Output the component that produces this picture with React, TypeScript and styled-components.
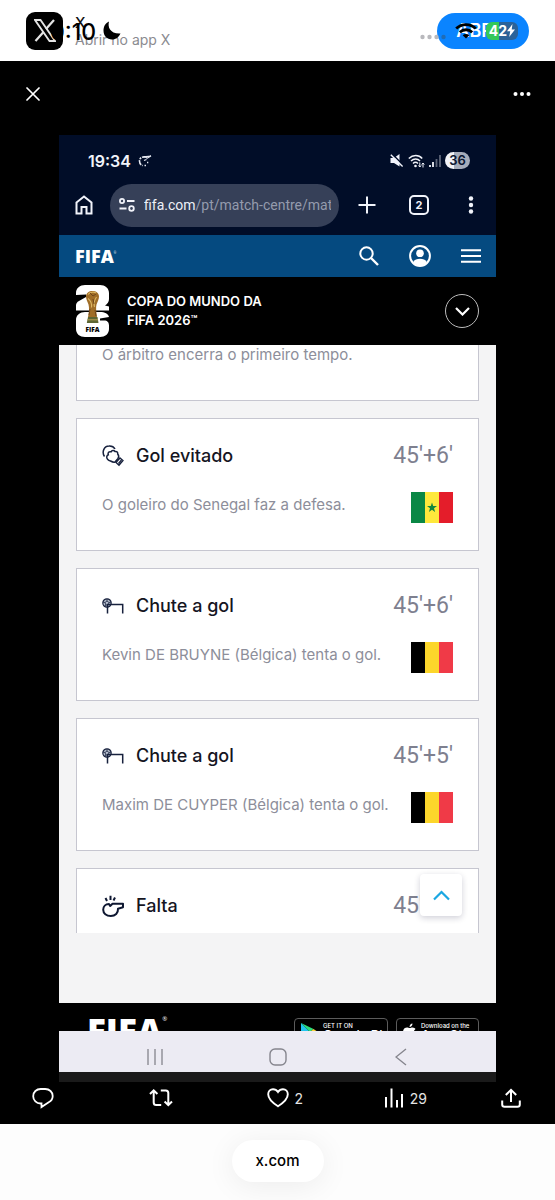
import React from "react";
import styled, { createGlobalStyle } from "styled-components";

const GlobalStyle = createGlobalStyle`
  *, *::before, *::after { box-sizing: border-box; }
  body {
    margin: 0;
    background: #fdfdfd;
    font-family: Inter, "Liberation Sans", sans-serif;
    color: #15151f;
  }
  button { border: 0; padding: 0; margin: 0; background: none; color: inherit; font: inherit; }
  a { color: inherit; text-decoration: none; }
  h2, h3, p, ul { margin: 0; padding: 0; }
  svg { display: block; flex: none; }
`;

/* ---------- App banner ---------- */

const Banner = styled.header`
  position: relative;
  display: flex;
  align-items: center;
  height: 61px;
  padding: 0 26px;
  background: #fff;
`;

const AppIcon = styled.span`
  display: grid;
  place-items: center;
  width: 37px;
  height: 38px;
  border-radius: 9px;
  background: #000;
`;

const BannerText = styled.div`
  display: flex;
  flex-direction: column;
  flex: 1;
  margin-left: 12px;
  font-size: 14px;
  line-height: 17px;
  color: #8b8b90;
`;

const BannerTitle = styled.strong`
  font-size: 15px;
  font-weight: 500;
  color: #111;
`;

const OpenButton = styled.button`
  width: 92px;
  height: 36px;
  border-radius: 18px;
  background: #0a84ff;
  color: #fff;
  font-size: 18px;
  font-weight: 600;
`;

const SystemStatus = styled.div`
  position: absolute;
  inset: 0 37px 0 50px;
  display: flex;
  align-items: center;
  justify-content: space-between;
  pointer-events: none;
`;

const StatusGroup = styled.div<{ $gap: number }>`
  display: flex;
  align-items: center;
  gap: ${(p) => p.$gap}px;
`;

const SystemTime = styled.time`
  font-size: 23px;
  line-height: 28px;
  padding-top: 2px;
  font-weight: 500;
  color: #000;
`;

const Carrier = styled.span`
  padding-top: 12px;
`;

const Battery = styled.span`
  display: flex;
  align-items: center;
  justify-content: center;
  width: 32px;
  height: 18px;
  border-radius: 6px;
  background: linear-gradient(90deg, #34c759 42%, #2a6299 42%);
  color: #fff;
  font-size: 14px;
  line-height: 18px;
  font-weight: 700;
`;

/* ---------- Media viewer ---------- */

const Viewer = styled.main`
  background: #000;
  color: #fff;
`;

const ViewerTop = styled.div`
  display: flex;
  justify-content: space-between;
  height: 74px;
  padding: 21px 21px 0;
`;

const IconButton = styled.button`
  display: grid;
  place-items: center;
  width: 24px;
  height: 24px;
`;

const Shot = styled.article`
  margin: 0 59px;
  overflow: hidden;
`;

const BrowserChrome = styled.div`
  background: #010d28;
  color: #f1f3fa;
`;

const PhoneStatus = styled.div`
  display: flex;
  align-items: center;
  justify-content: space-between;
  height: 48px;
  padding: 3px 26px 0 29px;
`;

const PhoneTime = styled.time`
  font-size: 16px;
  font-weight: 600;
`;

const PhoneBattery = styled.span`
  width: 25px;
  height: 17px;
  border-radius: 9px;
  background: linear-gradient(90deg, #f2f3f8 34%, #a6acba 34%);
  color: #0b1530;
  font-size: 13px;
  line-height: 17px;
  font-weight: 600;
  text-align: center;
`;

const Toolbar = styled.div`
  display: flex;
  align-items: center;
  height: 52px;
  padding: 0 13px 8px;
`;

const Address = styled.button`
  display: flex;
  align-items: center;
  flex: 1;
  min-width: 0;
  height: 43px;
  margin: 0 16px 0 14px;
  padding: 0 8px;
  gap: 8px;
  border-radius: 22px;
  background: #364058;
`;

const Url = styled.span`
  flex: 1;
  overflow: hidden;
  white-space: nowrap;
  text-align: left;
  font-family: Roboto, "Liberation Sans", sans-serif;
  font-size: 14px;
  line-height: 20px;
  color: #949bad;
`;

const Host = styled.span`
  color: #eef0f7;
`;

const ActionSet = styled.div<{ $gap: number }>`
  display: flex;
  align-items: center;
  gap: ${(p) => p.$gap}px;
`;

const SiteBar = styled.nav`
  display: flex;
  align-items: center;
  justify-content: space-between;
  height: 42px;
  padding: 0 13px 0 16px;
  background: #054a80;
`;

const Wordmark = styled.a<{ $size: number }>`
  display: flex;
  align-items: flex-start;
  font-family: "Open Sans", "Liberation Sans", sans-serif;
  font-size: ${(p) => p.$size}px;
  line-height: 1;
  font-weight: 800;
  color: #fff;
`;

const Registered = styled.sup<{ $size: number }>`
  font-size: ${(p) => p.$size}px;
  line-height: 12px;
  font-weight: 400;
  vertical-align: baseline;
`;

const EventBar = styled.div`
  display: flex;
  align-items: center;
  gap: 17px;
  height: 68px;
  padding: 0 17px;
  background: #000;
`;

const EventName = styled.h2`
  flex: 1;
  font-size: 13px;
  line-height: 19px;
  font-weight: 600;
`;

const TradeMark = styled.sup`
  font-size: 11px;
  line-height: 8px;
  vertical-align: 2px;
`;

const Expand = styled.button`
  display: grid;
  place-items: center;
  width: 34px;
  height: 34px;
  border: 1px solid #bcbcbc;
  border-radius: 50%;
`;

/* ---------- Match feed ---------- */

const Feed = styled.section`
  position: relative;
  padding: 0 17px 70px;
  background: #f4f4f5;
`;

const FeedList = styled.ul`
  display: flex;
  flex-direction: column;
  gap: 17px;
  list-style: none;
`;

const Card = styled.li<{ $cut?: "top" | "bottom" }>`
  height: ${(p) => (p.$cut === "top" ? 56 : p.$cut === "bottom" ? 65 : 133)}px;
  padding: ${(p) => (p.$cut === "top" ? 0 : 21)}px 25px 0;
  overflow: hidden;
  border: 1px solid #c6c6d0;
  border-top-width: ${(p) => (p.$cut === "top" ? 0 : 1)}px;
  border-bottom-width: ${(p) => (p.$cut === "bottom" ? 0 : 1)}px;
  background: #fff;
`;

const CardHead = styled.div`
  display: flex;
  align-items: center;
  gap: 12px;
  height: 32px;
  margin-bottom: 20px;
`;

const CardTitle = styled.h3`
  flex: 1;
  font-size: 18px;
  line-height: 24px;
  font-weight: 500;
  color: #15151f;
`;

const Minute = styled.span`
  font-family: Roboto, "Liberation Sans", sans-serif;
  font-size: 23px;
  line-height: 32px;
  color: #7e808f;
`;

const CardBody = styled.div`
  display: flex;
  justify-content: space-between;
`;

const Description = styled.p`
  font-size: 15px;
  line-height: 26px;
  white-space: nowrap;
  color: #8d8e9a;
`;

const CutDescription = styled(Description)`
  line-height: 20px;
`;

const ToTop = styled.button`
  position: absolute;
  right: 34px;
  bottom: 87px;
  display: grid;
  place-items: center;
  width: 42px;
  height: 42px;
  border-radius: 4px;
  background: #fff;
  box-shadow: 0 2px 6px rgba(20, 20, 60, 0.2);
`;

const SiteFooter = styled.footer`
  display: flex;
  align-items: flex-start;
  gap: 8px;
  height: 28px;
  padding: 15px 17px 0 28px;
  overflow: hidden;
  background: #000;
`;

const FooterBrand = styled.div`
  flex: 1;
  margin-top: -5px;
`;

const StoreBadge = styled.a<{ $width: number }>`
  display: flex;
  gap: 5px;
  width: ${(p) => p.$width}px;
  height: 28px;
  padding: 3px 6px;
  border: 1px solid #5c5c5c;
  border-radius: 4px;
`;

const StoreText = styled.span`
  display: flex;
  flex-direction: column;
  font-size: 6px;
  line-height: 7px;
  font-weight: 500;
  white-space: nowrap;
`;

const StoreName = styled.strong`
  font-size: 13px;
  line-height: 13px;
  font-weight: 500;
`;

const NavBar = styled.div`
  display: grid;
  grid-template-columns: repeat(3, 1fr);
  align-items: center;
  justify-items: center;
  height: 41px;
  padding: 11px 34px 0;
  background: #ecebf3;
  color: #85858d;
`;

const Strip = styled.div`
  height: 10px;
  background: #1a1a1a;
`;

const PostActions = styled.div`
  display: flex;
  height: 42px;
  padding: 4px 34px 0 32px;
`;

const PostAction = styled.button<{ $last?: boolean }>`
  display: flex;
  align-items: center;
  flex: ${(p) => (p.$last ? "none" : 1)};
  gap: 6px;
  height: 24px;
  font-size: 14px;
  color: #e4e4e4;
`;

const Bottom = styled.footer`
  display: flex;
  justify-content: center;
  height: 76px;
  padding-top: 16px;
  overflow: hidden;
  background: #fdfdfd;
`;

const Site = styled.a`
  width: 92px;
  height: 42px;
  border-radius: 21px;
  background: #fff;
  box-shadow: 0 4px 30px rgba(0, 0, 0, 0.07);
  font-size: 15px;
  line-height: 42px;
  font-weight: 500;
  text-align: center;
  color: #000;
`;

/* ---------- Drawings ---------- */

const line = { fill: "none", stroke: "currentColor", strokeWidth: 2 } as const;

const XLogo = () => (
  <svg width="22" height="23" viewBox="0 0 22 23" fill="none" stroke="#e4e4e4">
    <path d="M1 1h5.500l14.500 21h-5.500z" strokeWidth="1.800" />
    <path d="M20 1l-8 9M9.500 13L1.500 22" strokeWidth="2.200" />
  </svg>
);

const Moon = () => (
  <svg width="18" height="19" viewBox="0 0 18 19" fill="#000">
    <path d="M6 .5C4.500 6 7 13 17.500 12.500 15.500 17 12 18.500 9 18.500 4 18.500.5 14.800.5 9.800.5 5.500 2.500 2 6 .5z" />
  </svg>
);

const SignalDots = () => (
  <svg width="26" height="6" viewBox="0 0 26 6" fill="#b9b9bd">
    <circle cx="2.500" cy="3" r="2.200" />
    <circle cx="9.500" cy="3" r="2.200" />
    <circle cx="16.500" cy="3" r="2.200" />
    <circle cx="23.500" cy="3" r="2.200" fill="#216cb4" />
  </svg>
);

const WifiBold = () => (
  <svg width="22" height="16" viewBox="0 0 22 16" fill="none" stroke="#000" strokeWidth="2.800">
    <path d="M1.200 5.500c5.600-5.200 14-5.200 19.600 0M4.800 9.200c3.600-3.300 8.800-3.300 12.400 0" />
    <path d="M11 15.500L7.700 12.200c1.900-1.700 4.700-1.700 6.600 0z" fill="#000" stroke="none" />
  </svg>
);

const Bolt = () => (
  <svg width="8" height="13" viewBox="0 0 8 13" fill="#fff">
    <path d="M5.500 0L0 7.200h3.200L2.200 13 8 5.600H4.700z" />
  </svg>
);

const Close = () => (
  <svg width="14" height="14" viewBox="0 0 14 14" {...line} strokeLinecap="round" strokeWidth="1.700">
    <path d="M1 1l12 12M13 1L1 13" />
  </svg>
);

const Dots = ({ vertical }: { vertical?: boolean }) =>
  vertical ? (
    <svg width="6" height="18" viewBox="0 0 6 18" fill="currentColor">
      <circle cx="3" cy="2.500" r="2.200" />
      <circle cx="3" cy="9" r="2.200" />
      <circle cx="3" cy="15.500" r="2.200" />
    </svg>
  ) : (
    <svg width="18" height="6" viewBox="0 0 18 6" fill="currentColor">
      <circle cx="2.500" cy="3" r="2" />
      <circle cx="9" cy="3" r="2" />
      <circle cx="15.500" cy="3" r="2" />
    </svg>
  );

const Spinner = () => (
  <svg width="14" height="12" viewBox="0 0 14 12" fill="none" stroke="#e6e9f2" strokeWidth="1.600">
    <path d="M9 2.200C4.500 1 1.500 3 1.500 6c0 2.300 1.300 4 3.200 4.600" strokeDasharray="5 1 2 1" />
    <path d="M5.500 1.800L13 1 8.500 3.500" strokeWidth="1.200" />
    <path d="M6.500 10.500h1.500M9 7.500h1.300M6 5.500l2.500-1" strokeWidth="1.300" />
  </svg>
);

const Muted = () => (
  <svg width="14" height="13" viewBox="0 0 14 13">
    <path d="M.5 4h3.500l5.500-4v12.500L4 9H.5z" fill="currentColor" />
    <path d="M1.800 -.2l12 12" stroke="#010d28" strokeWidth="1.600" />
    <path d="M.8.8l11.800 11.700" stroke="currentColor" strokeWidth="1.400" />
  </svg>
);

const WifiThin = () => (
  <svg width="17" height="14" viewBox="0 0 17 14" fill="none" stroke="currentColor" strokeWidth="1.500">
    <path d="M.8 4.500c4-4 10-4 13.400 0M3 7c2.800-2.800 6.500-2.800 9 0M5 9.500c1.500-1.400 3.500-1.400 5 0" />
    <circle cx="7.500" cy="12" r="1.300" fill="currentColor" stroke="none" />
    <path d="M11.800 8.500v4.500M15 13.500V9M10.500 11.500l1.300 1.500 1.300-1.500M13.700 10.500L15 9l1.300 1.500" strokeWidth="1" />
  </svg>
);

const Bars = () => (
  <svg width="12" height="12" viewBox="0 0 12 12">
    <path d="M1 10v2M4 7v5" stroke="#eef0f7" strokeWidth="1.800" />
    <path d="M7.500 4v8M11 0v12" stroke="#5d6579" strokeWidth="1.800" />
  </svg>
);

const Home = () => (
  <svg width="18" height="20" viewBox="0 0 18 20" {...line}>
    <path d="M1.500 7.500L9 1.500l7.500 6V18.500h-5v-6.500h-5v6.500h-5z" />
  </svg>
);

const Tune = () => (
  <svg width="18" height="14" viewBox="0 0 18 14" {...line} strokeWidth="1.800">
    <circle cx="4" cy="3" r="2.100" />
    <circle cx="13.500" cy="10.500" r="2.300" />
    <path d="M9 3h7.500M1.500 10.500h7" />
  </svg>
);

const Plus = () => (
  <svg width="18" height="18" viewBox="0 0 18 18" {...line}>
    <path d="M9 0.500v17M.5 9h17" />
  </svg>
);

const TabFrame = styled.span`
  display: block;
  width: 20px;
  height: 20px;
  border: 2px solid currentColor;
  border-radius: 5px;
  font-size: 11px;
  line-height: 16px;
  font-weight: 700;
  text-align: center;
`;

const Search = () => (
  <svg width="20" height="20" viewBox="0 0 20 20" {...line}>
    <circle cx="7.500" cy="7.500" r="6.200" />
    <path d="M12 12l7 7" strokeWidth="2.400" />
  </svg>
);

const Account = () => (
  <svg width="22" height="22" viewBox="0 0 22 22" fill="#fff">
    <circle cx="11" cy="11" r="9.900" fill="none" stroke="#fff" strokeWidth="2" />
    <circle cx="11" cy="8.300" r="3.800" />
    <path d="M4 17.200c1.500-2.600 4-3.500 7-3.500s5.500.9 7 3.500c-1.900 2-4.200 3.300-7 3.300s-5.100-1.300-7-3.300z" />
  </svg>
);

const Menu = () => (
  <svg width="20" height="14" viewBox="0 0 20 14" {...line}>
    <path d="M0 1.200h20M0 7h20M0 12.800h20" />
  </svg>
);

const CupLogo = () => (
  <svg width="34" height="52" viewBox="0 0 34 52">
    <path d="M0 8C0 3 4 0 9 0h15c5 0 9 3 9 8v6c0 3-1.500 5-4 6.500l4 1v4H0V20.500c0-2 1-3.500 3-4.500l7-4V9.500L0 10z" fill="#fff" />
    <path d="M9 27h15c5 0 8 1.500 9 5l-9 1.500v2h4c3.500 0 5 2 5 5v3.500c0 5-4 8-9 8H9c-5 0-9-3-9-8V35c0-5 4-8 9-8z" fill="#fff" />
    <path d="M10 11.500C10 8 13 6 16.500 6s6.500 2 6.500 5.500c0 3-1.500 5-2.500 8-.8 3-.3 7 .5 12.500h-9c1.300-5.500 1.300-9 .5-12.500-1-3-2.500-5-2.500-8z" fill="#a06d27" />
    <path d="M12 9.500c2-2.500 6-3 8-1.500M12 13.500c2.500 2 4 5.500 3.500 9M20.500 12c-2 3-3 6-2 10" fill="none" stroke="#dcb765" strokeWidth="1.100" />
    <path d="M14 8l3 3 3-2M17 14l1 5M14 24l-1 6M19 25l1 6" fill="none" stroke="#6e461b" strokeWidth="1" />
    <path d="M12 32h9.500l1 6H10.800z" fill="#5d6633" />
    <path d="M11.500 34.800h10.500" stroke="#b8a056" strokeWidth="1" />
    <text x="16.500" y="47" textAnchor="middle" fontFamily="Open Sans, sans-serif" fontWeight="800" fontSize="6.500" fill="#000">
      FIFA
    </text>
  </svg>
);

const ChevronDown = () => (
  <svg width="15" height="9" viewBox="0 0 15 9" {...line} strokeWidth="2.200">
    <path d="M1 1l6.500 6.500L14 1" />
  </svg>
);

const ChevronUp = () => (
  <svg width="17" height="11" viewBox="0 0 17 11" fill="none" stroke="#1ba7e2" strokeWidth="2.200">
    <path d="M1 9.500L8.500 2 16 9.500" />
  </svg>
);

const Glove = () => (
  <svg width="22" height="22" viewBox="0 0 22 22" {...line} stroke="#17213d" strokeWidth="1.500">
    <path d="M2.500 11.500C-.5 7 2 1.200 7 1c3-.2 5 1.200 6 3" />
    <path d="M8.500 16C6 15.500 4.300 13.500 4.800 11.500c.3-1 1-1.500 1.500-1.700-.8-2 .7-3.500 2.700-3 .8-1.500 3-1.800 4-.3 2-.5 3 1 2.700 2.500 1.300 1.500 1.300 3 .3 4.500l-3 3.500c-1.500.5-3-.2-4.500-1z" />
    <path d="M14 17.500l4-4.500 3 2.500-4 4.700zM16.500 18.500l3-3.700" strokeWidth="1.300" />
  </svg>
);

const GoalShot = () => (
  <svg width="22" height="16" viewBox="0 0 22 16" fill="none" stroke="#17213d" strokeWidth="1.500">
    <circle cx="5" cy="5" r="4.200" fill="#b9c1cf" strokeWidth="1.200" />
    <path d="M5 3l2 1.500L6.200 7H3.800L3 4.500zM5 3V1M7 4.500l2-.5M3 4.500l-2-.5M3.800 7L2.500 8.500" strokeWidth=".8" />
    <path d="M5.500 15.500V6.500h15.200v9" />
  </svg>
);

const Whistle = () => (
  <svg width="22" height="22" viewBox="0 0 22 22" {...line} stroke="#0e1731" strokeLinejoin="round">
    <path d="M7 9l1.200 2 2.300-2.200h10.500v3.500L16 13.800c.3 4.200-2.700 7.200-7.200 7.200C4.300 21 1.200 18.300 1.200 14.800 1.200 11.500 3.500 9 7 9z" />
    <path d="M3.500 3l1.500 3M8.500.8V5M13 2.500l-1.500 3" />
  </svg>
);

const Flag = ({ colors, star }: { colors: string[]; star?: boolean }) => (
  <svg width="42" height="31" viewBox="0 0 42 31">
    {colors.map((c, i) => (
      <rect key={c} x={i * 14} width="14" height="31" fill={c} />
    ))}
    {star && <path d="M21 10.500l1.200 3.600H26l-3 2.200 1.100 3.600-3.100-2.200-3.100 2.200 1.100-3.600-3-2.200h3.800z" fill="#12853f" />}
  </svg>
);

const PlayMark = () => (
  <svg width="17" height="20" viewBox="0 0 17 20">
    <path d="M0 1v18l9-9z" fill="#21c4ee" />
    <path d="M0 1l12.500 6L9 10z" fill="#2bdc7c" />
    <path d="M12.500 7L17 10l-4.500 3L9 10z" fill="#fdd43a" />
    <path d="M0 19l12.500-6L9 10z" fill="#f0475a" />
  </svg>
);

const AppleMark = () => (
  <svg width="13" height="17" viewBox="0 0 13 17" fill="#fff">
    <path d="M9.500 1.500C9.500 3.500 8 5 6.500 5c0-2 1.500-3.300 3-3.500zM9.500 5.500c1.500 0 2.500.8 3 1.500-2.500 1.700-2 5 .5 6-1 2.500-2.200 3.500-3.500 3.500-1 0-1.500-.5-2.700-.5s-1.800.5-2.600.5C2 16.500 0 13 0 10c0-3 2-4.500 4-4.500 1 0 2 .6 2.700.6.8 0 1.700-.6 2.800-.6z" />
  </svg>
);

const Recents = () => (
  <svg width="16" height="16" viewBox="0 0 16 16" {...line} strokeWidth="1.300">
    <path d="M1 0v16M8 0v16M15 0v16" />
  </svg>
);

const HomeKey = () => (
  <svg width="18" height="18" viewBox="0 0 18 18" {...line} strokeWidth="1.400">
    <rect x="1" y="1" width="16" height="16" rx="5" />
  </svg>
);

const BackKey = () => (
  <svg width="12" height="18" viewBox="0 0 12 18" {...line} strokeWidth="1.400">
    <path d="M11 1L1 9l10 8" />
  </svg>
);

const Reply = () => (
  <svg width="22" height="22" viewBox="0 0 22 22" {...line} stroke="#fff" strokeWidth="1.800">
    <path d="M9.500 16.500h-1C4.500 16.500 1.200 13.300 1.200 9.200 1.200 5 4.500 2 8.700 2h4.500c4.200 0 7.500 3 7.500 7 0 3-1.500 5-4 6.300L9.500 20z" />
  </svg>
);

const Repost = () => (
  <svg width="24" height="20" viewBox="0 0 24 20" {...line} stroke="#fff">
    <path d="M1 6l3.700-3.700L8.400 6M4.700 3v11.500c0 1.500 1 2.500 2.500 2.500h5" />
    <path d="M23 13.500l-3.700 3.700-3.700-3.700M19.300 16.500V5c0-1.500-1-2.500-2.500-2.500h-5" />
  </svg>
);

const Heart = () => (
  <svg width="22" height="20" viewBox="0 0 22 20" {...line} stroke="#fff" strokeWidth="1.900">
    <path d="M11 4C9.500 1.800 7.800 1.200 6 1.200 3.200 1.200 1.200 3.500 1.200 6.300c0 4.500 4.300 8.500 9.800 12 5.500-3.500 9.800-7.500 9.800-12 0-2.800-2-5.100-4.800-5.100-1.800 0-3.500.6-5 2.800z" />
  </svg>
);

const Views = () => (
  <svg width="20" height="20" viewBox="0 0 20 20" {...line} stroke="#fff">
    <path d="M2 9v10.500M7.500.5v19M13 12v7.500M18 6v13.500" />
  </svg>
);

const Share = () => (
  <svg width="20" height="20" viewBox="0 0 20 20" {...line} stroke="#fff">
    <path d="M10 14V2M4.800 7L10 1.800 15.200 7M1.200 12.500v4c0 1.400.9 2.300 2.300 2.300h13c1.400 0 2.300-.9 2.300-2.300v-4" />
  </svg>
);

/* ---------- Data ---------- */

const belgium = ["#000000", "#fcd62b", "#f03a47"];
const senegal = ["#0a8745", "#fee83c", "#e41d2a"];

const events = [
  { title: "Gol evitado", minute: "45'+6'", text: "O goleiro do Senegal faz a defesa.", flag: senegal, star: true, Icon: Glove },
  { title: "Chute a gol", minute: "45'+6'", text: "Kevin DE BRUYNE (Bélgica) tenta o gol.", flag: belgium, Icon: GoalShot },
  { title: "Chute a gol", minute: "45'+5'", text: "Maxim DE CUYPER (Bélgica) tenta o gol.", flag: belgium, Icon: GoalShot },
];

export default function App() {
  return (
    <>
      <GlobalStyle />
      <Banner>
        <AppIcon><XLogo /></AppIcon>
        <BannerText>
          <BannerTitle>X</BannerTitle>
          <span>Abrir no app X</span>
        </BannerText>
        <OpenButton>ABRIR</OpenButton>
        <SystemStatus>
          <StatusGroup $gap={7}>
            <SystemTime>0:10</SystemTime>
            <Moon />
          </StatusGroup>
          <StatusGroup $gap={9}>
            <Carrier><SignalDots /></Carrier>
            <WifiBold />
            <Battery>42<Bolt /></Battery>
          </StatusGroup>
        </SystemStatus>
      </Banner>

      <Viewer>
        <ViewerTop>
          <IconButton aria-label="Fechar"><Close /></IconButton>
          <IconButton aria-label="Mais opções"><Dots /></IconButton>
        </ViewerTop>

        <Shot>
          <BrowserChrome>
            <PhoneStatus>
              <StatusGroup $gap={7}>
                <PhoneTime>19:34</PhoneTime>
                <Spinner />
              </StatusGroup>
              <StatusGroup $gap={4}>
                <Muted />
                <WifiThin />
                <Bars />
                <PhoneBattery>36</PhoneBattery>
              </StatusGroup>
            </PhoneStatus>
            <Toolbar>
              <IconButton aria-label="Página inicial"><Home /></IconButton>
              <Address>
                <Tune />
                <Url><Host>fifa.com</Host>/pt/match-centre/match</Url>
              </Address>
              <ActionSet $gap={28}>
                <IconButton aria-label="Nova guia"><Plus /></IconButton>
                <IconButton aria-label="Guias"><TabFrame>2</TabFrame></IconButton>
                <IconButton aria-label="Menu"><Dots vertical /></IconButton>
              </ActionSet>
            </Toolbar>
          </BrowserChrome>

          <SiteBar>
            <Wordmark href="#" $size={18}>FIFA<Registered $size={3}>®</Registered></Wordmark>
            <ActionSet $gap={27}>
              <IconButton aria-label="Buscar"><Search /></IconButton>
              <IconButton aria-label="Conta"><Account /></IconButton>
              <IconButton aria-label="Menu do site"><Menu /></IconButton>
            </ActionSet>
          </SiteBar>

          <EventBar>
            <CupLogo />
            <EventName>COPA DO MUNDO DA<br />FIFA 2026<TradeMark>™</TradeMark></EventName>
            <Expand aria-label="Expandir"><ChevronDown /></Expand>
          </EventBar>

          <Feed>
            <FeedList>
              <Card $cut="top">
                <CutDescription>O árbitro encerra o primeiro tempo.</CutDescription>
              </Card>
              {events.map(({ title, minute, text, flag, star, Icon }) => (
                <Card key={text}>
                  <CardHead>
                    <Icon />
                    <CardTitle>{title}</CardTitle>
                    <Minute>{minute}</Minute>
                  </CardHead>
                  <CardBody>
                    <Description>{text}</Description>
                    <Flag colors={flag} star={star} />
                  </CardBody>
                </Card>
              ))}
              <Card $cut="bottom">
                <CardHead>
                  <Whistle />
                  <CardTitle>Falta</CardTitle>
                  <Minute>45'+4'</Minute>
                </CardHead>
              </Card>
            </FeedList>
            <ToTop aria-label="Voltar ao topo"><ChevronUp /></ToTop>
          </Feed>

          <SiteFooter>
            <FooterBrand>
              <Wordmark href="#" $size={35}>FIFA<Registered $size={6}>®</Registered></Wordmark>
            </FooterBrand>
            <StoreBadge href="#" $width={94}>
              <PlayMark />
              <StoreText>GET IT ON<StoreName>Google Play</StoreName></StoreText>
            </StoreBadge>
            <StoreBadge href="#" $width={83}>
              <AppleMark />
              <StoreText>Download on the<StoreName>App Store</StoreName></StoreText>
            </StoreBadge>
          </SiteFooter>

          <NavBar>
            <IconButton aria-label="Recentes"><Recents /></IconButton>
            <IconButton aria-label="Início"><HomeKey /></IconButton>
            <IconButton aria-label="Voltar"><BackKey /></IconButton>
          </NavBar>
          <Strip />
        </Shot>

        <PostActions>
          <PostAction aria-label="Responder"><Reply /></PostAction>
          <PostAction aria-label="Repostar"><Repost /></PostAction>
          <PostAction aria-label="Curtir"><Heart />2</PostAction>
          <PostAction aria-label="Visualizações"><Views />29</PostAction>
          <PostAction aria-label="Compartilhar" $last><Share /></PostAction>
        </PostActions>
      </Viewer>

      <Bottom>
        <Site href="https://x.com">x.com</Site>
      </Bottom>
    </>
  );
}
